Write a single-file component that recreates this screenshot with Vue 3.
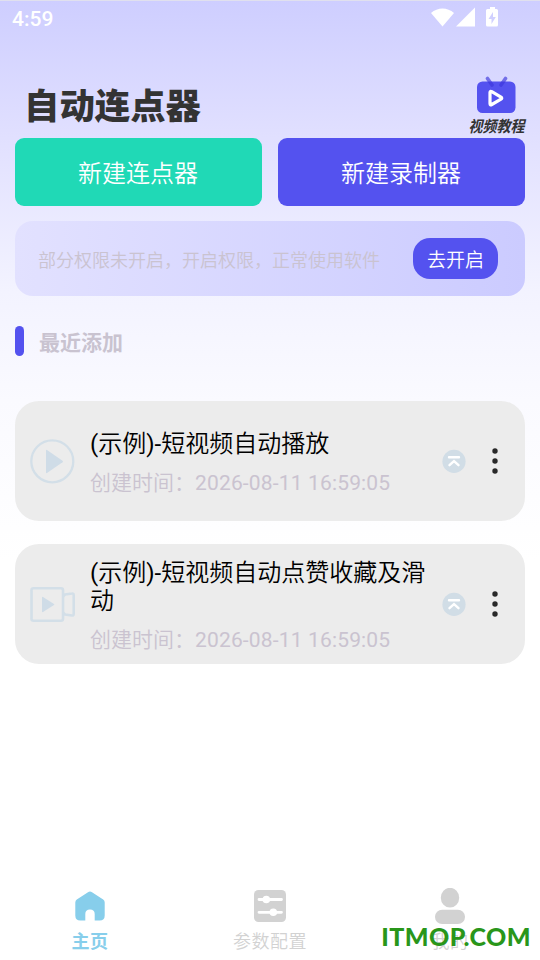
<script setup>
const tasks = [
  { kind: 'click', title: '短视频自动播放', time: '2026-08-11 16:59:05' },
  { kind: 'record', title: '短视频自动点赞收藏及滑动', time: '2026-08-11 16:59:05' },
]
</script>

<template>
  <div class="screen">
    <header class="status">
      <span class="clock">4:59</span>
      <svg class="signals" width="70" height="22" viewBox="0 0 70 22" fill="#fff">
        <path d="M0 6C6.500 0 16.500 0 23 6L11.500 19.500z" />
        <path d="M44 .5v19H25z" />
        <path fill-rule="evenodd" d="M59 0h5v2h1.500q1.500 0 1.500 1.500v14.500q0 1.500-1.500 1.500h-9q-1.500 0-1.500-1.500v-14.500q0-1.500 1.500-1.500H59zM62 5L57.500 12H60.500V17L64.800 10H62z" />
      </svg>
    </header>

    <div class="heading">
      <h1>自动连点器</h1>
      <div class="tutorial">
        <svg width="40" height="38" viewBox="0 0 40 38">
          <rect x="1" y="5.500" width="38.500" height="31.500" rx="5.500" fill="#5452ef" />
          <path d="M11.500 2.500l4.500 6.500M29.500 2.500l-4.500 6.500" stroke="#3c35dc" stroke-opacity=".65" stroke-width="3.600" stroke-linecap="round" />
          <path d="M14 16.500v11q0 2 1.800 1l9.200-5.300q1.500-1 0-2L15.800 15.700Q14 14.700 14 16.500z" fill="none" stroke="#fff" stroke-width="3.200" stroke-linejoin="round" />
        </svg>
        <span>视频教程</span>
      </div>
    </div>

    <div class="actions">
      <button class="create green">新建连点器</button>
      <button class="create">新建录制器</button>
    </div>

    <section class="notice">
      <span>部分权限未开启，开启权限，正常使用软件</span>
      <button>去开启</button>
    </section>

    <h2><i></i>最近添加</h2>

    <main class="list">
      <article v-for="task in tasks" :key="task.kind" class="card">
        <svg class="kind" width="46" height="46" viewBox="0 0 46 46" fill="none" stroke="#d3dfe8" stroke-width="2.600">
          <template v-if="task.kind === 'click'">
            <circle cx="22.300" cy="23.300" r="21" stroke-width="2.300" />
            <path d="M16 12.500v22q0 1 1 .5L32.500 24.300q1-.8 0-1.600L17 12q-1-.5-1 .5z" fill="#cfdce7" stroke="none" />
          </template>
          <template v-else>
            <rect x="1.500" y="7.300" width="31.500" height="32.500" rx="2" />
            <path d="M33 15.500l2-2 7-1q1.700-.3 1.700 1.500v19q0 1.800-1.700 1.500l-7-1-2-2" />
            <path d="M12 16.500v14q0 1 1 .5L24 24q.7-.5 0-1L13 16q-1-.5-1 .5z" fill="#cfdce7" stroke="none" />
          </template>
        </svg>
        <div class="info">
          <div class="name"><b>(</b>示例<b>)-</b>{{ task.title }}</div>
          <div class="time"><span>创建时间：</span>{{ task.time }}</div>
        </div>
        <svg class="top" width="24" height="24" viewBox="0 0 24 24">
          <circle cx="12" cy="12.400" r="11.600" fill="#d1dde6" />
          <path d="M7 8.300h10M7.500 16.200l4.500-4 4.500 4" fill="none" stroke="#fff" stroke-width="2.400" stroke-linecap="round" />
        </svg>
        <svg class="more" width="8" height="28" viewBox="0 0 8 28" fill="#292929">
          <circle cx="4" cy="4" r="2.700" /><circle cx="4" cy="14" r="2.700" /><circle cx="4" cy="24" r="2.700" />
        </svg>
      </article>
    </main>

    <nav>
      <a class="active">
        <svg width="36" height="36" viewBox="0 0 36 36" fill="#87ceeb">
          <path d="M3.300 14.500q0-2 1.500-3L16 4.200q2-1.600 4 0l11.200 7.300q1.500 1 1.500 3V27.500q0 5-5 5h-5V26q0-4.500-4.700-4.500T13.300 26v6.500h-5q-5 0-5-5z" />
        </svg>
        <span>主页</span>
      </a>
      <a>
        <svg width="36" height="36" viewBox="0 0 36 36">
          <rect x="2" y="2" width="32" height="32" rx="4.500" fill="#d2d2d2" />
          <path d="M7 11.500h22.500M7 24.300h22.500" stroke="#fff" stroke-width="2.800" stroke-linecap="round" />
          <circle cx="14.300" cy="11.500" r="3.800" fill="#fff" /><circle cx="21.300" cy="24.300" r="3.800" fill="#fff" />
        </svg>
        <span>参数配置</span>
      </a>
      <a>
        <svg width="36" height="36" viewBox="0 0 36 36" fill="#d2d2d2">
          <ellipse cx="18" cy="9.700" rx="9.200" ry="9.900" /><rect x="3" y="21.700" width="30" height="14.300" rx="7.100" />
        </svg>
        <span>我的</span>
      </a>
    </nav>
    <div class="watermark">ITMOP.COM</div>
  </div>
</template>

<style>
body { margin: 0; }
</style>

<style scoped>
* { box-sizing: border-box; }
.screen {
  position: relative;
  width: 540px;
  height: 960px;
  overflow: hidden;
  display: flex;
  flex-direction: column;
  padding: 0 15px;
  border-top: 1px solid #e0e0ee;
  background: linear-gradient(#ceceff 0, #e1e0ff 137px, #f3f3ff 290px, #fafaff 400px, #fff 560px);
  font-family: Roboto, "Noto Sans CJK SC", sans-serif;
}
svg { display: block; flex: none; }
button { border: 0; padding: 0; color: #fff; font-family: inherit; font-weight: 350; background: #5452ef; }
.status { height: 69px; display: flex; justify-content: space-between; padding: 6px 24px 0 0; }
.clock { margin-left: -3px; color: #fff; font-size: 21px; line-height: 24px; font-weight: 500; }
.heading { height: 68px; display: flex; justify-content: space-between; }
h1 { margin: 12px 0 0 9px; font-size: 35.400px; line-height: 50px; font-weight: 900; color: #333; }
.tutorial { width: 57px; display: flex; flex-direction: column; align-items: center; padding-top: 6px; }
.tutorial svg { margin-left: -2px; }
.tutorial span { margin-top: 2px; font-size: 14px; line-height: 20px; font-style: italic; font-weight: 700; color: #333; white-space: nowrap; transform: scaleY(1.12); }
.actions { display: grid; grid-template-columns: 1fr 1fr; gap: 16px; height: 68px; flex: none; }
.create { border-radius: 9px; font-size: 24px; padding: 0 1px 2px 0; }
.create.green { background: #20d9b6; }
.notice { height: 75px; flex: none; margin-top: 15px; border-radius: 18px; padding: 0 27px 0 23px; display: flex; align-items: center; justify-content: space-between; background: linear-gradient(90deg, #e2e1ff, #cbcbff); }
.notice span { font-size: 18px; font-weight: 350; color: #cac3d0; white-space: nowrap; }
.notice button { width: 85px; height: 41px; border-radius: 17px; font-size: 19px; }
h2 { margin: 30px 0 0; height: 30px; display: flex; align-items: center; gap: 15px; font-size: 21px; font-weight: 700; color: #c9c3d0; }
h2 i { width: 9px; height: 30px; border-radius: 4.500px; background: #5452ef; }
.list { margin-top: 45px; display: flex; flex-direction: column; gap: 23px; }
.card { height: 120px; border-radius: 24px; background: #ececec; display: flex; align-items: center; padding: 0 26px 0 15px; }
.info { width: 338px; margin-left: 14px; padding-top: 4px; }
.name { color: #000; font-size: 24px; line-height: 28px; font-weight: 350; }
.name b { font-weight: 400; }
.time { margin-top: 11px; color: #cac3d0; font-size: 21px; line-height: 28px; letter-spacing: .16px; white-space: nowrap; }
.time span { font-weight: 350; letter-spacing: 0; }
.top { margin-left: 13.500px; }
.more { margin-left: auto; }
nav { position: relative; margin: auto -15px 0; height: 72px; display: grid; grid-template-columns: repeat(3, 1fr); }
nav a { display: flex; flex-direction: column; align-items: center; gap: 5px; color: #d2d2d2; font-size: 18px; line-height: 26px; font-weight: 350; letter-spacing: .5px; }
nav .active { color: #87ceeb; font-weight: 700; }
.watermark { position: absolute; right: 9px; bottom: 7px; color: #29961a; font: 900 25px/34px Lato, sans-serif; letter-spacing: .45px; }
</style>
